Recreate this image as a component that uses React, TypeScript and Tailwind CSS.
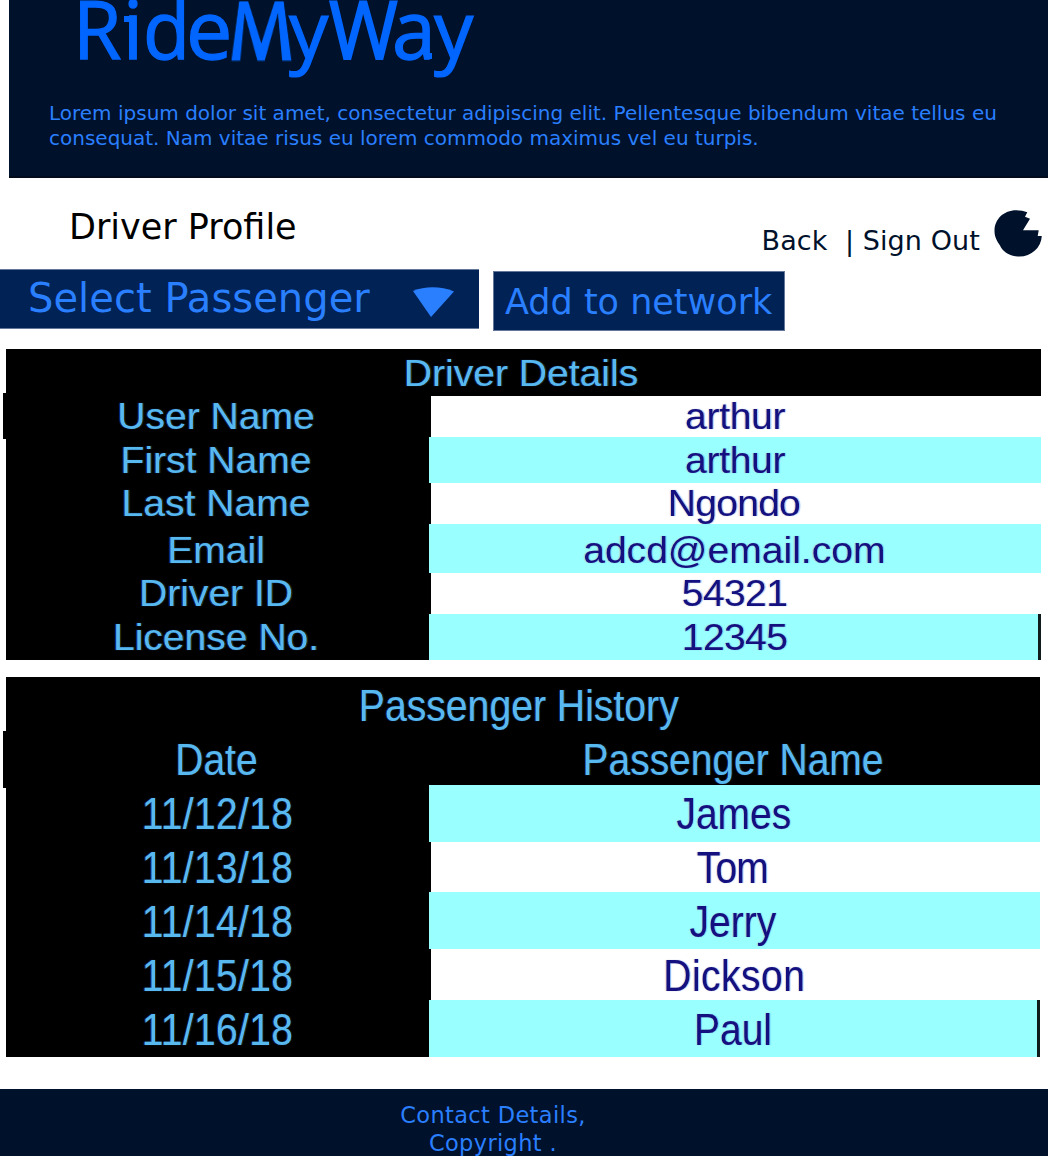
import React from "react";

type Row = { label: string; value: string; row: string; text: string; edge: string; fit?: string };

const LETTERS = [
  { ch: "R", box: "w-[50px]", glyph: "scale-x-[0.97]" },
  { ch: "i", box: "w-[20.5px]", glyph: "" },
  { ch: "d", box: "w-[43.2px]", glyph: "scale-x-[0.95]" },
  { ch: "e", box: "w-[38.6px]", glyph: "scale-x-[1.02]" },
  { ch: "M", box: "w-[64.4px]", glyph: "[-webkit-text-stroke:2.4px_#0066ff]" },
  { ch: "y", box: "w-[39.3px]", glyph: "scale-x-[0.97] scale-y-[0.96]" },
  { ch: "W", box: "w-[63.2px]", glyph: "scale-x-[0.92] [-webkit-text-stroke:1.9px_#0066ff]" },
  { ch: "a", box: "w-[42.5px]", glyph: "scale-x-[0.97]" },
  { ch: "y", box: "w-[39.3px]", glyph: "scale-x-[0.97] scale-y-[0.96]" },
];

const DETAILS: Row[] = [
  { label: "User Name", value: "arthur", row: "h-[41px]", text: "mt-[3px]", edge: "ml-[2px] pr-[1px] bg-white", fit: "-tracking-[0.3px]" },
  { label: "First Name", value: "arthur", row: "h-[46px]", text: "mt-[6px]", edge: "bg-[#99ffff]", fit: "-tracking-[0.3px]" },
  { label: "Last Name", value: "Ngondo", row: "h-[41px]", text: "mt-[3px]", edge: "ml-[2px] pr-[5px] bg-white", fit: "-tracking-[0.7px]" },
  { label: "Email", value: "adcd@email.com", row: "h-[49px]", text: "mt-[9px]", edge: "pr-[1px] bg-[#99ffff]" },
  { label: "Driver ID", value: "54321", row: "h-[41px]", text: "mt-[3px]", edge: "ml-[2px] pr-[2px] bg-white", fit: "-tracking-[0.6px]" },
  { label: "License No.", value: "12345", row: "h-[46px]", text: "mt-[6px]", edge: "bg-[#99ffff] pl-[3px] border-r-[3px] border-[#101c1c]", fit: "-tracking-[0.6px]" },
];

const HISTORY: Row[] = [
  { label: "11/12/18", value: "James", row: "h-[57px]", text: "mt-[7px]", edge: "pr-[1px] bg-[#99ffff]" },
  { label: "11/13/18", value: "Tom", row: "h-[50px]", text: "mt-[4px]", edge: "ml-[2px] pr-[7px] bg-white", fit: "-tracking-[0.8px]" },
  { label: "11/14/18", value: "Jerry", row: "h-[57px]", text: "mt-[8px]", edge: "pr-[3px] bg-[#99ffff]" },
  { label: "11/15/18", value: "Dickson", row: "h-[51px]", text: "mt-[5px]", edge: "ml-[2px] pr-[3px] bg-white", fit: "tracking-[0.6px]" },
  { label: "11/16/18", value: "Paul", row: "h-[57px]", text: "mt-[8px]", edge: "bg-[#99ffff] border-r-[3px] border-[#101c1c]" },
];

const LIGHT = "text-[#58b9ee] blur-[0.5px] [text-shadow:-1px_0_1px_#0038b0,1px_0_1px_#3d3a08]";
const DARK = "text-[#151080] blur-[0.5px] [text-shadow:-1px_0_1px_#d88a7066,1px_0_1px_#3090ff88]";

function Logo() {
  return (
    <h1 className="-mt-[13.2px] ml-[63.8px] flex h-[81px] font-['Open_Sans'] text-[81px] leading-none text-[#0066ff] [-webkit-text-stroke:1.3px_#0066ff]">
      {LETTERS.map((l, i) => (
        <span key={i} className={`relative block shrink-0 ${l.box}`}>
          <span
            className={`inline-block origin-left ${l.glyph}`}
            style={
              l.ch === "M"
                ? { transformOrigin: "50% 72px", transform: "matrix3d(1,0,0,0, 0,1.31,0,-0.00575, 0,0,1,0, 0,0,0,1)" }
                : undefined
            }
          >
            {l.ch}
          </span>
          {l.ch === "i" && <span className="absolute top-[29px] left-[1.5px] h-[6px] w-[8px] bg-[#0066ff]" />}
          {l.ch === "a" && (
            <span className="absolute top-[62px] left-[31px] h-[10.5px] w-[9px] rounded-bl-[7px] border-b-[6px] border-l-[4px] border-[#0066ff]" />
          )}
        </span>
      ))}
    </h1>
  );
}

function TableRows({ rows, stretch, labelFit }: { rows: Row[]; stretch: string; labelFit: string }) {
  return (
    <>
      {rows.map((r) => (
        <div key={r.label} className={`flex ${r.row}`}>
          <div className="flex w-[423px] shrink-0 justify-center pr-[3px]">
            <span className={`inline-block ${r.text} ${stretch} ${labelFit} ${LIGHT}`}>{r.label}</span>
          </div>
          <div className={`flex flex-1 justify-center ${r.edge}`}>
            <span className={`inline-block ${r.text} ${stretch} ${r.fit ?? ""} ${DARK}`}>{r.value}</span>
          </div>
        </div>
      ))}
    </>
  );
}

export default function App() {
  return (
    <div className="h-[1156px] w-[1048px] overflow-hidden bg-white font-['DejaVu_Sans',sans-serif]">
      <header className="ml-[9px] flow-root h-[178px] overflow-hidden border-b-2 border-[#020b1c] bg-[#00112b]">
        <Logo />
        <p className="mt-[33px] ml-[40px] text-[20px] leading-[25px] whitespace-nowrap text-[#2a7fff]">
          Lorem ipsum dolor sit amet, consectetur adipiscing elit. Pellentesque bibendum vitae tellus eu
          <br />
          consequat. Nam vitae risus eu lorem commodo maximus vel eu turpis.
        </p>
      </header>

      <nav className="flex h-[91px] items-start">
        <h2 className="mt-[32px] ml-[69px] text-[35px] leading-none text-black">Driver Profile</h2>
        <div className="mt-[49px] ml-auto mr-[14px] text-[27px] leading-none tracking-[0.1px] whitespace-pre text-[#00112b]">
          <a>Back</a>
          {"  | "}
          <a>Sign Out</a>
        </div>
        <svg className="mt-[31px] mr-[5px] h-[49px] w-[49px]" viewBox="994 209 49 49">
          <path
            fill="#00112b"
            d="M1027.3 212.3L1025 216.7L1030 218.7L1023 230.3H1038.7L1037.7 236H1041.8A22.4 21.5 0 0 1 1019.5 256.5C1010 256.5 1003 252 1000 245.5C997 241 994.5 237 994.5 231C994.5 219 1004 210.3 1016 210.3C1020.5 210.3 1024 211 1027.3 212.3Z"
          />
        </svg>
      </nav>

      <div className="flex h-[80px] items-start text-[#2a7fff]">
        <button className="flex h-[60px] w-[479px] items-start border-y border-[#63779a] bg-[#002255] text-left">
          <span className="mt-[8px] ml-[28px] w-[384px] text-[40px] leading-none tracking-[0.05px] whitespace-nowrap">Select Passenger</span>
          <svg className="mt-[16px] h-[31px] w-[42px]" viewBox="0 0 42 31">
            <path fill="#2a7fff" d="M1 5C13 0 29 0 42 5.5L19 31Z" />
          </svg>
        </button>
        <button className="mt-[2px] ml-[14px] flex h-[60px] w-[292px] items-start border border-[#63779a] bg-[#002255] text-left">
          <span className="mt-[13px] ml-[11px] text-[35px] leading-none whitespace-nowrap">Add to network</span>
        </button>
      </div>

      <section className="mr-[7px] ml-[6px] h-[311px] bg-black font-['Liberation_Sans'] text-[36px] leading-none">
        <div className="flex h-[47px] justify-center pr-[4px]">
          <h3 className={`mt-[7px] inline-block scale-x-[1.085] ${LIGHT}`}>Driver Details</h3>
        </div>
        <div className="relative">
          <div className="absolute -top-[3px] -left-[3px] h-[46px] w-[3px] bg-black" />
          <TableRows rows={DETAILS} stretch="scale-x-[1.085]" labelFit="" />
        </div>
      </section>

      <section className="mt-[17px] mr-[8px] ml-[6px] h-[380px] bg-black font-['Liberation_Sans'] text-[44px] leading-none">
        <div className="flex h-[54px] justify-center pr-[8px]">
          <h3 className={`mt-[7px] inline-block scale-x-[0.89] ${LIGHT}`}>Passenger History</h3>
        </div>
        <div className="relative flex h-[54px]">
          <div className="absolute top-0 -left-[3px] h-[57px] w-[3px] bg-black" />
          <div className="flex w-[423px] shrink-0 justify-center pr-[3px]">
            <span className={`mt-[7px] inline-block scale-x-[0.885] ${LIGHT}`}>Date</span>
          </div>
          <div className="flex flex-1 justify-center pr-[3px]">
            <span className={`mt-[7px] inline-block scale-x-[0.885] whitespace-nowrap ${LIGHT}`}>Passenger Name</span>
          </div>
        </div>
        <TableRows rows={HISTORY} stretch="scale-x-[0.885]" labelFit="pl-[3px] tracking-[0.4px]" />
      </section>

      <footer className="mt-[32px] h-[67px] bg-[#00112b] pt-[12px] pr-[62px] text-center text-[22.5px] leading-[28px] tracking-[0.35px] text-[#2a7fff]">
        <p>Contact Details,</p>
        <p>Copyright .</p>
      </footer>
    </div>
  );
}
